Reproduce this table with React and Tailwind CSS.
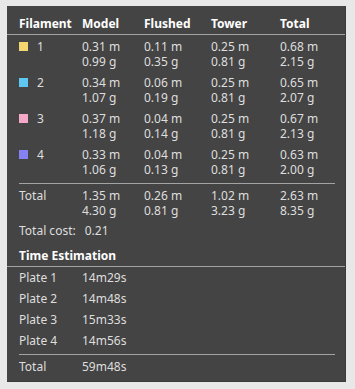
import React from "react";

const filaments = [
  { id: 1, color: "#f4d56e", model: ["0.31 m", "0.99 g"], flushed: ["0.11 m", "0.35 g"], tower: ["0.25 m", "0.81 g"], total: ["0.68 m", "2.15 g"] },
  { id: 2, color: "#5ec8f2", model: ["0.34 m", "1.07 g"], flushed: ["0.06 m", "0.19 g"], tower: ["0.25 m", "0.81 g"], total: ["0.65 m", "2.07 g"] },
  { id: 3, color: "#f6a8c9", model: ["0.37 m", "1.18 g"], flushed: ["0.04 m", "0.14 g"], tower: ["0.25 m", "0.81 g"], total: ["0.67 m", "2.13 g"] },
  { id: 4, color: "#8582f4", model: ["0.33 m", "1.06 g"], flushed: ["0.04 m", "0.13 g"], tower: ["0.25 m", "0.81 g"], total: ["0.63 m", "2.00 g"] },
];

const plates = [
  ["Plate 1", "14m29s"],
  ["Plate 2", "14m48s"],
  ["Plate 3", "15m33s"],
  ["Plate 4", "14m56s"],
];

const cols = "grid grid-cols-[63px_62px_67px_69px_1fr]";

const Cell = ({ lines }) => (
  <div className="flex flex-col">
    {lines.map((l) => (
      <span key={l}>{l}</span>
    ))}
  </div>
);

export default function App() {
  return (
    <div className="min-h-[389px] w-[355px] bg-[#e8e8e8] pt-[6px] pl-[7px]">
      <div
        className="w-[339px] border-r border-b border-[#3b3b3b] bg-[#444444] pb-[7px] text-[12px] leading-[15px] text-[#dedede]"
        style={{ fontFamily: '"Noto Sans", "Liberation Sans", sans-serif' }}
      >
        {/* Filament table header */}
        <div className={`${cols} border-b border-[#a3a3a3] pt-[10px] pb-[3px] pl-[12px] font-bold text-white`}>
          <span>Filament</span>
          <span>Model</span>
          <span>Flushed</span>
          <span>Tower</span>
          <span>Total</span>
        </div>

        <div className="flex flex-col gap-[6px] pt-[4px] pl-[12px]">
          {filaments.map((f) => (
            <div key={f.id} className={cols}>
              <div className="flex items-start gap-[9px]">
                <span className="mt-[3px] h-[9px] w-[9px]" style={{ backgroundColor: f.color }} />
                <span>{f.id}</span>
              </div>
              <Cell lines={f.model} />
              <Cell lines={f.flushed} />
              <Cell lines={f.tower} />
              <Cell lines={f.total} />
            </div>
          ))}
        </div>

        <div className="mt-[6px] ml-[12px] mr-[10px] h-px bg-[#a3a3a3]" />

        <div className={`${cols} mt-[4px] pl-[12px]`}>
          <span>Total</span>
          <Cell lines={["1.35 m", "4.30 g"]} />
          <Cell lines={["0.26 m", "0.81 g"]} />
          <Cell lines={["1.02 m", "3.23 g"]} />
          <Cell lines={["2.63 m", "8.35 g"]} />
        </div>

        <div className="mt-[5px] flex gap-[9px] pl-[12px]">
          <span>Total cost:</span>
          <span>0.21</span>
        </div>

        {/* Time estimation */}
        <div className="mt-[10px] border-b border-[#a3a3a3] pb-[3px] pl-[12px] font-bold text-white">
          Time Estimation
        </div>

        <div className="flex flex-col gap-[6px] pt-[3px] pl-[12px]">
          {plates.map(([name, time]) => (
            <div key={name} className="grid grid-cols-[63px_1fr]">
              <span>{name}</span>
              <span>{time}</span>
            </div>
          ))}
        </div>

        <div className="mt-[6px] ml-[12px] mr-[10px] h-px bg-[#a3a3a3]" />

        <div className="mt-[4px] grid grid-cols-[63px_1fr] pl-[12px]">
          <span>Total</span>
          <span>59m48s</span>
        </div>
      </div>
    </div>
  );
}
